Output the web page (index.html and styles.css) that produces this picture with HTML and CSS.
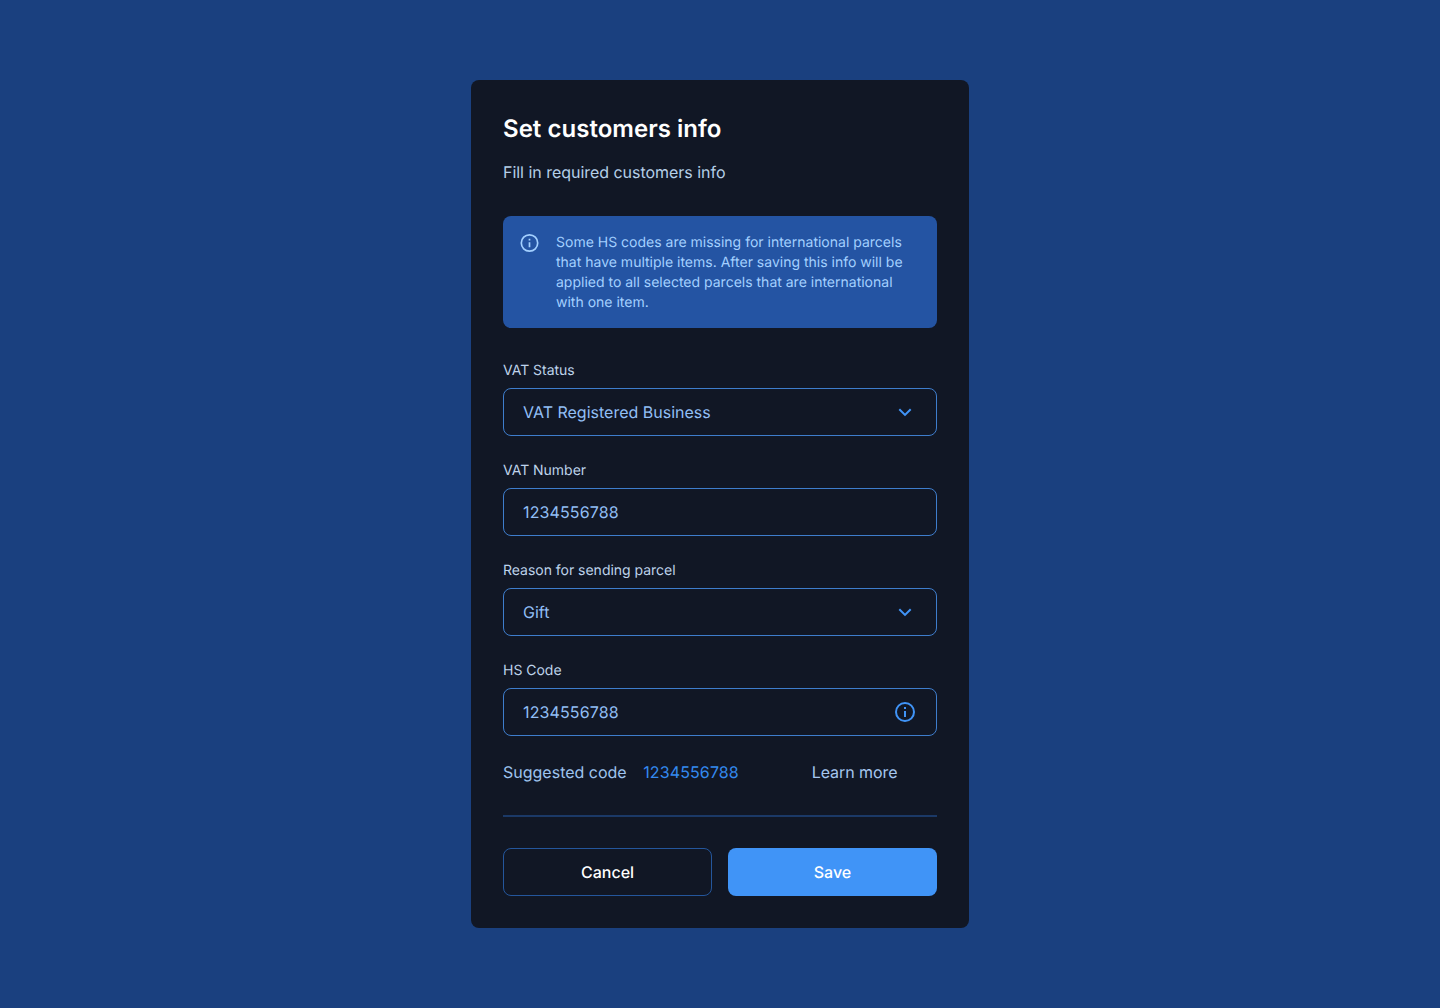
FILE: index.html
```html
<!DOCTYPE html>
<html lang="en">

<head>
    <meta charset="UTF-8">
    <meta name="viewport" content="width=device-width, initial-scale=1.0">
    <title>Set customers info</title>
    <link rel="stylesheet" href="styles.css">
</head>

<body>
    <main class="modal">
        <h1>Set customers info</h1>
        <p class="subtitle">Fill in required customers info</p>

        <div class="alert">
            <svg class="alert-icon" width="20" height="20" viewBox="0 0 20 20" fill="none" stroke="currentColor" stroke-width="1.7">
                <circle cx="10.5" cy="10" r="8.2" />
                <path d="M10.5 9.2v5M10.5 5.8v1.7" />
            </svg>
            <p>Some HS codes are missing for international parcels<br>
                that have multiple items. After saving this info will be<br>
                applied to all selected parcels that are international<br>
                with one item.</p>
        </div>

        <form>
            <div class="field">
                <label for="vatStatus">VAT Status</label>
                <button type="button" class="control" id="vatStatus">
                    VAT Registered Business
                    <svg width="24" height="24" viewBox="0 0 24 24" fill="none" stroke="currentColor" stroke-width="2">
                        <path d="M6.3 9.2l5.7 5.7 5.7-5.7" />
                    </svg>
                </button>
            </div>

            <div class="field">
                <label for="vatNumber">VAT Number</label>
                <div class="control">
                    <input type="text" id="vatNumber" value="1234556788">
                </div>
            </div>

            <div class="field">
                <label for="reason">Reason for sending parcel</label>
                <button type="button" class="control" id="reason">
                    Gift
                    <svg width="24" height="24" viewBox="0 0 24 24" fill="none" stroke="currentColor" stroke-width="2">
                        <path d="M6.3 9.2l5.7 5.7 5.7-5.7" />
                    </svg>
                </button>
            </div>

            <div class="field">
                <label for="hsCode">HS Code</label>
                <div class="control">
                    <input type="text" id="hsCode" value="1234556788">
                    <svg width="24" height="24" viewBox="0 0 24 24" fill="none" stroke="currentColor" stroke-width="2">
                        <circle cx="12" cy="12" r="9" />
                        <path d="M12 11v6M12 7v2" />
                    </svg>
                </div>
            </div>

            <div class="suggestion">
                <span>Suggested code</span>
                <a class="code" href="#">1234556788</a>
                <a class="learn-more" href="#">Learn more</a>
            </div>

            <div class="actions">
                <button type="button" class="btn btn-cancel">Cancel</button>
                <button type="submit" class="btn btn-save">Save</button>
            </div>
        </form>
    </main>
</body>

</html>
```
FILE: styles.css
```css
* {
    margin: 0;
    padding: 0;
    box-sizing: border-box;
}

body {
    font-family: Inter, sans-serif;
    font-size: 16px;
    line-height: 24px;
    text-rendering: geometricPrecision;
    background-color: #1a407f;
    min-height: 100vh;
    display: flex;
    justify-content: center;
    align-items: center;
}

/* Modal */
.modal {
    width: 498px;
    padding: 32px;
    background-color: #111725;
    border-radius: 8px;
}

h1 {
    padding-top: 1px;
    font-size: 24px;
    line-height: 32px;
    font-weight: 600;
    letter-spacing: 0.03px;
    color: #fff;
}

.subtitle {
    margin-top: 15px;
    letter-spacing: -0.03px;
    color: #b5cfe8;
}

/* Info message */
.alert {
    display: flex;
    gap: 17px;
    margin: 32px 0;
    padding: 17px 16px 15px;
    background-color: #2454a3;
    border-radius: 8px;
    font-size: 14px;
    line-height: 20px;
    color: #a3d0ff;
}

.alert-icon {
    flex-shrink: 0;
}

/* Form */
.field {
    margin-bottom: 24px;
}

label {
    display: block;
    padding-top: 1px;
    margin-bottom: 7px;
    font-size: 14px;
    line-height: 20px;
    letter-spacing: -0.02px;
    color: #bed3ea;
}

.control {
    display: flex;
    align-items: center;
    justify-content: space-between;
    width: 100%;
    height: 48px;
    padding: 0 19px;
    font: inherit;
    text-rendering: inherit;
    color: #92bff5;
    background: none;
    border: 1px solid #3e7dcc;
    border-radius: 8px;
}

.control svg {
    color: #4094f7;
}

input {
    flex: 1;
    min-width: 0;
    font: inherit;
    text-rendering: inherit;
    letter-spacing: 0.12px;
    color: inherit;
    background: none;
    border: none;
    outline: none;
}

.suggestion {
    display: flex;
    color: #9ec3ee;
}

.suggestion a {
    text-decoration: none;
}

.suggestion .code {
    margin-left: 16.5px;
    letter-spacing: 0.12px;
    color: #348af0;
}

.suggestion .learn-more {
    margin-left: auto;
    margin-right: 39.5px;
    letter-spacing: -0.06px;
    color: #a5c6ee;
}

/* Buttons */
.actions {
    display: flex;
    gap: 16px;
    margin-top: 31px;
    padding-top: 31px;
    border-top: 2px solid #1b3967;
}

.btn {
    width: 50%;
    height: 48px;
    font: inherit;
    font-weight: 500;
    text-rendering: inherit;
    color: #fff;
    border: none;
    border-radius: 8px;
    cursor: pointer;
}

.btn-cancel {
    background: none;
    border: 1px solid #24569c;
}

.btn-save {
    background-color: #4094f7;
}
```
